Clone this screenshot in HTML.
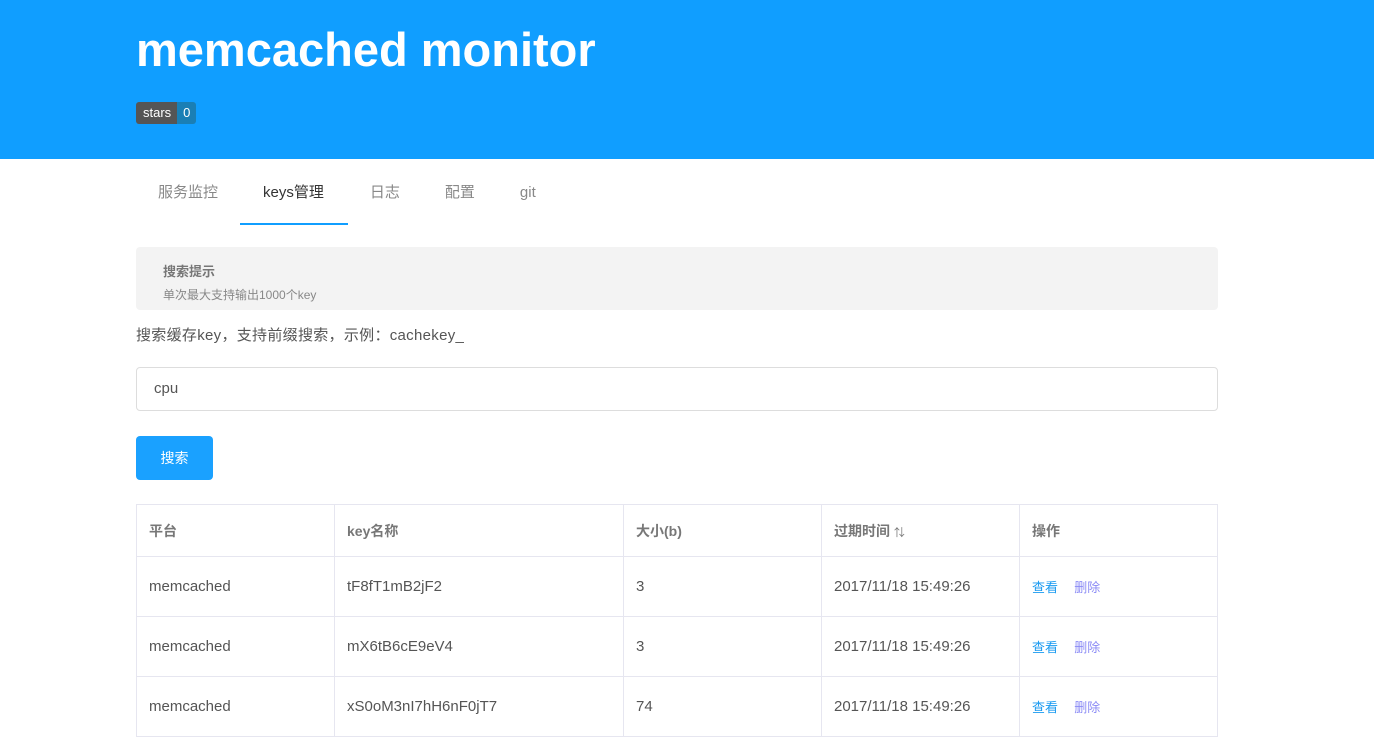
<!DOCTYPE html>
<html><head><meta charset="utf-8"><style>
*{box-sizing:border-box;margin:0;padding:0}
body{width:1374px;height:738px;overflow:hidden;background:#fff;font-family:"Liberation Sans","Noto Sans CJK SC",sans-serif;color:#555}
.hd{height:159px;background:#109eff;position:relative}
.hd h1{position:absolute;left:136px;top:22px;color:#fff;font-size:47px;font-weight:bold;letter-spacing:0px}
.badge{position:absolute;left:136px;top:102px;height:22px;border-radius:3px;overflow:hidden;display:flex;font-size:13px;color:#fff;line-height:22px}
.badge .a{background:#555;padding:0 6px 0 7px}.badge .b{background:#1a7fb5;padding:0 6px}
.tabs{position:absolute;top:159px;left:136px;height:66px;display:flex}
.tab{padding:0 22px;line-height:68px;font-size:15px;color:#888;position:relative;height:66px}
.tab.on{color:#333;padding:0 24px 0 23px}.tab.on:after{content:"";position:absolute;left:0;right:0;bottom:0;height:2px;background:#109eff}
.alert{position:absolute;left:136px;top:247px;width:1082px;height:63px;background:#f3f3f3;border-radius:4px;padding:14px 27px}
.alert b{display:block;font-size:13px;color:#777}.alert span{display:block;font-size:12px;color:#888;margin-top:6px}
.lbl{position:absolute;left:136px;top:324px;font-size:15px;color:#555;letter-spacing:0.3px}
.inp{position:absolute;left:136px;top:367px;width:1082px;height:44px;border:1px solid #ddd;border-radius:4px;padding:0 17px;line-height:42px;font-size:15px}
.btn{position:absolute;left:136px;top:436px;width:77px;height:44px;background:#1aa1ff;border-radius:4px;color:#fff;font-size:14px;text-align:center;line-height:44px}
table{position:absolute;left:136px;top:504px;width:1082px;border-collapse:collapse;font-size:15px}
td,th{border:1px solid #e6e6f0;text-align:left;padding:0 12px;height:60px}
th{height:52px;font-size:14px;color:#777;font-weight:bold}
a{font-size:13px;text-decoration:none;color:#1a9af0;margin-right:12px}
a.d{color:#8a8af5}
</style></head><body>
<div class="hd"><h1>memcached monitor</h1><div class="badge"><span class="a">stars</span><span class="b">0</span></div></div>
<div class="tabs"><div class="tab">服务监控</div><div class="tab on">keys管理</div><div class="tab">日志</div><div class="tab" style="padding:0 23px">配置</div><div class="tab">git</div></div>
<div class="alert"><b>搜索提示</b><span>单次最大支持输出1000个key</span></div>
<div class="lbl">搜索缓存key，支持前缀搜索，示例：cachekey_</div>
<div class="inp">cpu</div>
<div class="btn">搜索</div>
<table>
<tr><th style="width:198px">平台</th><th style="width:289px">key名称</th><th style="width:198px">大小(b)</th><th style="width:198px">过期时间 <span style="font-weight:normal;font-size:11px">⇅</span></th><th>操作</th></tr>
<tr><td>memcached</td><td>tF8fT1mB2jF2</td><td>3</td><td>2017/11/18 15:49:26</td><td><a>查看</a> <a class="d">删除</a></td></tr>
<tr><td>memcached</td><td>mX6tB6cE9eV4</td><td>3</td><td>2017/11/18 15:49:26</td><td><a>查看</a> <a class="d">删除</a></td></tr>
<tr><td>memcached</td><td>xS0oM3nI7hH6nF0jT7</td><td>74</td><td>2017/11/18 15:49:26</td><td><a>查看</a> <a class="d">删除</a></td></tr>
</table>
</body></html>
